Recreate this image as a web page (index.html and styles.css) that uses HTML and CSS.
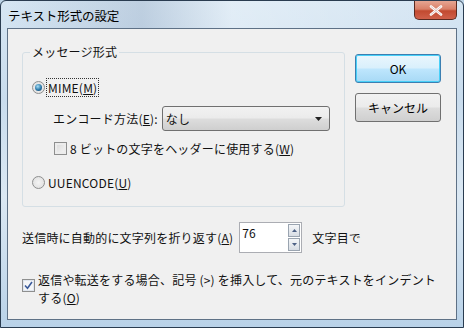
FILE: index.html
```html
<!DOCTYPE html>
<html lang="ja">
<head>
<meta charset="utf-8">
<link rel="stylesheet" href="styles.css">
</head>
<body>
<div class="window">
  <div class="titlebar">
    <span class="title">テキスト形式の設定</span>
    <span class="close"><svg width="14" height="11" viewBox="0 0 14 11"><path d="M2 1.5 L12 9.5 M12 1.5 L2 9.5" stroke="#fff" stroke-width="2.6" stroke-linecap="round"/><path d="M2 1.5 L12 9.5 M12 1.5 L2 9.5" stroke="#7a1a10" stroke-width="0.6" stroke-linecap="round" opacity="0.4"/></svg></span>
  </div>
  <div class="client">
    <div class="top">
      <fieldset class="group">
        <legend>メッセージ形式</legend>
        <div class="row r-mime">
          <span class="radio on"></span>
          <span class="focus">MIME(<u>M</u>)</span>
        </div>
        <div class="row r-enc">
          <span class="lbl">エンコード方法(<u>E</u>):</span>
          <span class="combo"><span>なし</span><svg width="8" height="4" viewBox="0 0 8 4"><path d="M0 0 H7 L3.5 4 Z" fill="#222"/></svg></span>
        </div>
        <div class="row r-chk">
          <span class="check"></span>
          <span>8 ビットの文字をヘッダーに使用する(<u>W</u>)</span>
        </div>
        <div class="row r-uu">
          <span class="radio"></span>
          <span>UUENCODE(<u>U</u>)</span>
        </div>
      </fieldset>
      <div class="buttons">
        <button class="btn default">OK</button>
        <button class="btn">キャンセル</button>
      </div>
    </div>
    <div class="wrap">
      <span>送信時に自動的に文字列を折り返す(<u>A</u>)</span>
      <span class="spin"><span class="val">76</span><span class="arrows"><span class="up"><svg width="5" height="3" viewBox="0 0 5 3"><path d="M0 3 L2.5 0 L5 3Z" fill="#4d6185"/></svg></span><span class="dn"><svg width="5" height="3" viewBox="0 0 5 3"><path d="M0 0 L2.5 3 L5 0Z" fill="#4d6185"/></svg></span></span></span>
      <span>文字目で</span>
    </div>
    <div class="indent">
      <span class="check checked"><svg width="9" height="9" viewBox="0 0 9 9"><path d="M1 4.5 L3.5 7.2 L8 1" fill="none" stroke="#3a5a9a" stroke-width="1.6"/></svg></span>
      <span class="itext">返信や転送をする場合、記号 (&gt;) を挿入して、元のテキストをインデントする(<u>O</u>)</span>
    </div>
  </div>
</div>
</body>
</html>
```

FILE: styles.css
```css
* { box-sizing: border-box; }
html, body { margin: 0; padding: 0; }
body {
  width: 464px; height: 328px; overflow: hidden;
  font-family: "Noto Sans CJK JP", "Noto Sans", sans-serif;
  font-size: 12px; color: #111;
  letter-spacing: 0.2px;
  background: #bcd3e6;
}
.window {
  width: 464px; height: 328px;
  border: 1px solid #2a3c50;
  border-radius: 6px 6px 0 0;
  background: linear-gradient(180deg, #d6e6f3 0%, #c9dced 30%, #dbe8f3 60%, #b9d2e8 100%);
  display: flex; flex-direction: column;
  padding: 0 6px 7px 6px;
}
.titlebar {
  height: 27px; display: flex; align-items: flex-start; position: relative;
  background: linear-gradient(90deg, rgba(255,255,255,0) 0%, rgba(120,140,170,0.25) 30%, rgba(255,255,255,0.3) 50%, rgba(255,255,255,0) 100%);
}
.title { margin: 5px 0 0 1px; font-size: 12.5px; color: #000; letter-spacing: -0.1px; }
.close {
  position: absolute; right: 0; top: 0;
  width: 43px; height: 19px;
  border: 1px solid #5a2a20; border-top: none;
  border-radius: 0 0 5px 5px;
  background: linear-gradient(180deg, #e6a592 0%, #d98068 45%, #c24a30 55%, #d0604a 100%);
  display: flex; align-items: center; justify-content: center;
}
.client {
  flex: 1;
  background: #f0f0f0;
  border: 1px solid #5e7186;
  padding: 15px 14px 0 14px;
  display: flex; flex-direction: column;
}
.top { display: flex; align-items: flex-start; gap: 10px; }
.group {
  margin: 0; width: 323px; height: 163px;
  border: 1px solid #d5dfe5; border-radius: 3px;
  padding: 0 0 0 9px;
  display: flex; flex-direction: column;
}
.group legend { padding: 0 2px; margin-left: -2px; line-height: 16px; }
.row { display: flex; align-items: center; }
.r-mime { margin-top: 19px; gap: 2px; }
.r-enc { margin-top: 10px; padding-left: 21px; gap: 4px; }
.r-chk { margin-top: 9px; padding-left: 22px; gap: 3px; }
.r-uu { margin-top: 17px; gap: 3px; }
.focus { outline: 1px dotted #333; outline-offset: 0; padding: 0 1px; line-height: 17px; }
.radio {
  width: 13px; height: 13px; border-radius: 50%;
  border: 1px solid #8e8f8f;
  background: radial-gradient(circle at 50% 50%, #f4f4f4 0%, #dcdcdc 100%);
  display: inline-flex; align-items: center; justify-content: center;
}
.radio.on::after {
  content: ""; width: 7px; height: 7px; border-radius: 50%;
  background: radial-gradient(circle at 40% 35%, #a8e0f8 0%, #2a78a8 55%, #12385e 100%);
}
.check {
  width: 13px; height: 13px; border: 1px solid #8e8f8f;
  background: linear-gradient(135deg, #d8d8d8 0%, #f6f6f6 100%);
  box-shadow: inset 0 0 0 2px #ececec;
  display: inline-flex; align-items: center; justify-content: center;
}
.check.checked { background: #f4f6f8; box-shadow: inset 0 0 0 1px #e0e6ee; }
.combo {
  width: 168px; height: 25px;
  border: 1px solid #707070; border-radius: 3px;
  background: linear-gradient(180deg, #f2f2f2 0%, #ebebeb 48%, #dddddd 52%, #cfcfcf 100%);
  display: flex; align-items: center; justify-content: space-between;
  padding: 0 6px 0 3px;
}
.buttons { display: flex; flex-direction: column; gap: 10px; margin-top: 10px; }
.btn {
  width: 86px; height: 29px; margin: 0;
  font: inherit; color: #000;
  border: 1px solid #707070; border-radius: 3px;
  background: linear-gradient(180deg, #f2f2f2 0%, #ebebeb 48%, #dddddd 52%, #cfcfcf 100%);
  padding: 0;
}
.btn.default {
  border-color: #3c7fb1;
  background: linear-gradient(180deg, #eaf6fd 0%, #d9f0fc 48%, #bee6fd 52%, #a7d9f5 100%);
  box-shadow: inset 0 0 0 1px #48d0f8;
}
.wrap { display: flex; align-items: center; margin-top: 15px; }
.wrap > span:first-child { margin-right: 6px; }
.spin {
  width: 63px; height: 31px; border: 1px solid #abadb3; background: #fff;
  display: flex; justify-content: space-between; padding: 1px 1px 1px 2px;
  margin-right: 10px;
}
.val { line-height: 16px; padding-top: 1px; }
.arrows { display: flex; flex-direction: column; width: 12px; gap: 1px; }
.arrows > span {
  flex: 1; border: 1px solid #9aa4b0;
  background: linear-gradient(180deg, #f4f6f8, #d8dde4);
  display: flex; align-items: center; justify-content: center;
}
.indent { display: flex; align-items: flex-start; margin-top: 18px; gap: 3px; }
.indent .check { margin-top: 8px; flex: none; }
.itext { width: 400px; line-height: 18px; }
u { text-decoration: underline; text-underline-offset: 1px; }
```
